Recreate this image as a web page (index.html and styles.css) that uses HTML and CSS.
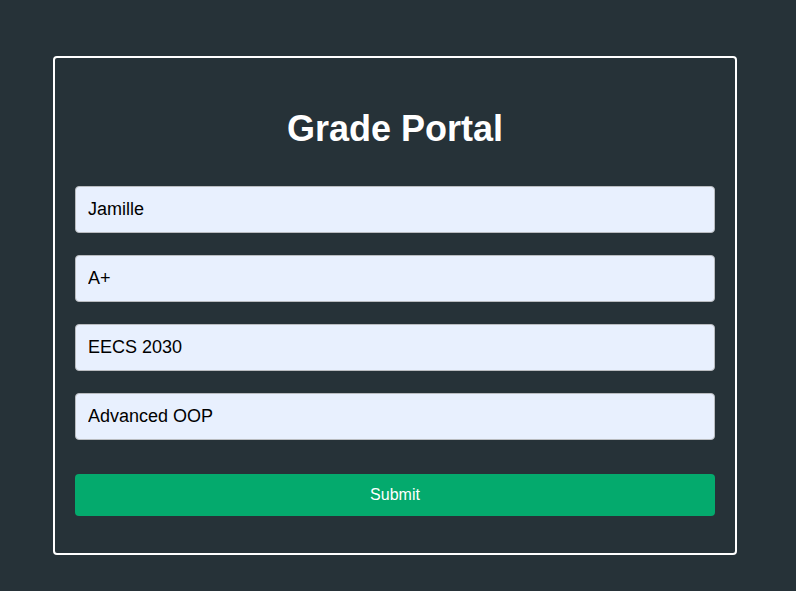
FILE: index.html
```html
<!DOCTYPE html>
<html>
<head>
<meta charset="utf-8">
<link rel="stylesheet" href="styles.css">
</head>
<body>
<main class="page">
  <form class="card">
    <h1 class="title">Grade Portal</h1>
    <div class="fields">
      <input class="field" type="text" value="Jamille">
      <input class="field" type="text" value="A+">
      <input class="field" type="text" value="EECS 2030">
      <input class="field" type="text" value="Advanced OOP">
    </div>
    <button class="submit" type="button">Submit</button>
  </form>
</main>
</body>
</html>
```
FILE: styles.css
```css
html, body {
  margin: 0;
  padding: 0;
  background: #263238;
  font-family: "Liberation Sans", Arial, sans-serif;
}
.page {
  padding: 56px 0 0 53px;
}
.card {
  box-sizing: border-box;
  width: 684px;
  border: 2px solid #ffffff;
  border-radius: 4px;
  padding: 20px 20px 37px;
  display: flex;
  flex-direction: column;
}
.title {
  margin: 30px 0 37px;
  text-align: center;
  color: #ffffff;
  font-size: 36px;
  font-weight: bold;
  line-height: 41px;
}
.fields {
  display: flex;
  flex-direction: column;
  gap: 22px;
}
.field {
  box-sizing: border-box;
  width: 640px;
  height: 47px;
  margin: 0;
  padding: 0 12px;
  border: 1px solid #b9bcc0;
  border-radius: 4px;
  background: #e8f0fe;
  color: #000000;
  font-family: "Liberation Sans", Arial, sans-serif;
  font-size: 18px;
  outline: none;
}
.submit {
  margin-top: 34px;
  width: 640px;
  height: 42px;
  border: none;
  border-radius: 4px;
  background: #04aa6d;
  color: #ffffff;
  font-family: "Liberation Sans", Arial, sans-serif;
  font-size: 16px;
}
```
